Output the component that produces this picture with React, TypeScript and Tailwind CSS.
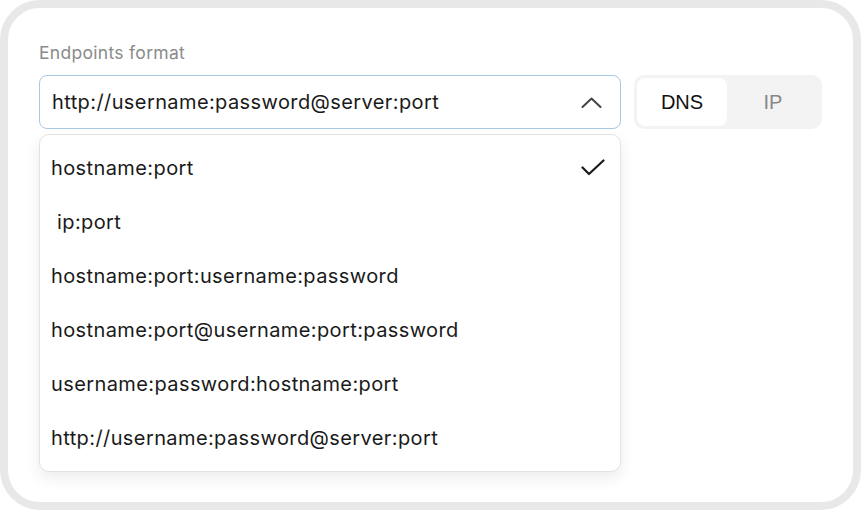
import React from 'react';

const formats = [
  'hostname:port',
  ' ip:port',
  'hostname:port:username:password',
  'hostname:port@username:port:password',
  'username:password:hostname:port',
  'http://username:password@server:port',
];

const CheckMark = () => (
  <svg width="24" height="18" viewBox="0 0 24 18" fill="none" stroke="#1a1a1a" strokeWidth="2.2" strokeLinecap="round" strokeLinejoin="round">
    <path d="M1.5 8.5 8 15 22.5 1.5" />
  </svg>
);

const ChevronUp = () => (
  <svg width="21" height="11" viewBox="0 0 21 11" fill="none" stroke="#444" strokeWidth="2" strokeLinecap="round" strokeLinejoin="round">
    <path d="M1.5 10 10.5 1.5 19.5 10" />
  </svg>
);

const App: React.FC = () => {
  const selected = 'hostname:port';
  const current = 'http://username:password@server:port';

  return (
    <div className="w-[861px] h-[510px] bg-white" style={{ fontFamily: 'Inter, "Noto Sans", sans-serif' }}>
      <div className="h-full border-[8px] border-[#e8e8e8] rounded-[40px] bg-white px-[31px] pt-[34px]">
        <div className="text-[17.5px] leading-[22px] tracking-[0.3px] text-[#8a8a8a]">Endpoints format</div>

        <div className="flex gap-[13px] mt-[11px]">
          <div className="relative w-[582px]">
            <div className="h-[54px] flex items-center justify-between pl-[12px] pr-[18px] rounded-[8px] border-[1.5px] border-[#a9c8e4] bg-white">
              <span className="text-[20px] tracking-[0.4px] text-[#1a1a1a]">{current}</span>
              <ChevronUp />
            </div>

            {/* open dropdown menu */}
            <div className="absolute left-0 right-0 top-full mt-[5px] bg-white rounded-[10px] border border-[#e3e3e3] shadow-[0_6px_16px_rgba(0,0,0,0.08)] py-[6px]">
              {formats.map((f) => (
                <div key={f} className="h-[54px] flex items-center justify-between pl-[11px] pr-[15px]">
                  <span className="text-[20px] tracking-[0.4px] text-[#1a1a1a] whitespace-pre">{f}</span>
                  {f === selected && <CheckMark />}
                </div>
              ))}
            </div>
          </div>

          <div className="w-[188px] h-[54px] flex p-[3px] rounded-[10px] bg-[#f3f3f3]">
            <div
              className="w-[90px] h-full flex items-center justify-center rounded-[8px] bg-white text-[20px] text-[#111]"
              style={{ fontFamily: '"Liberation Sans", Arial, sans-serif' }}
            >
              DNS
            </div>
            <div
              className="flex-1 flex items-center justify-center text-[20px] text-[#888]"
              style={{ fontFamily: '"Liberation Sans", Arial, sans-serif' }}
            >
              IP
            </div>
          </div>
        </div>
      </div>
    </div>
  );
};

export default App;
